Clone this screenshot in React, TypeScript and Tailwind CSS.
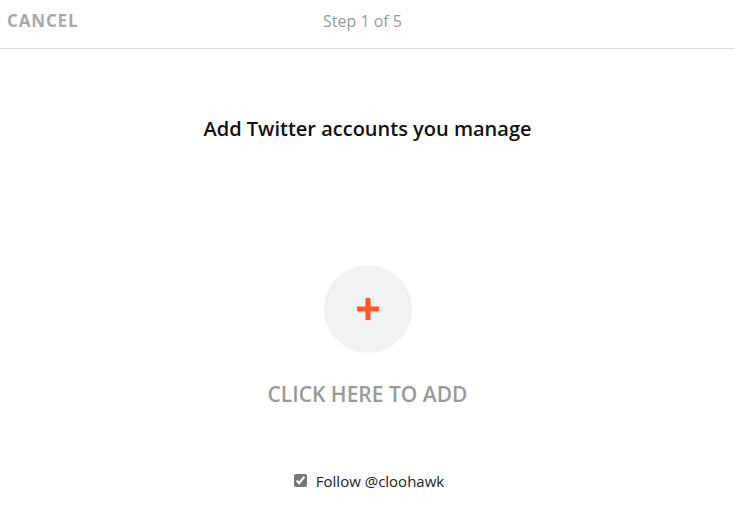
import React, { useState } from 'react';

export default function App() {
  const [follow, setFollow] = useState(true);

  return (
    <div className="min-h-screen bg-white" style={{ fontFamily: '"Open Sans", sans-serif' }}>
      <header className="flex h-[49px] items-center border-b border-[#dddddd] pb-[6px]">
        <button className="w-[90px] pl-[7px] text-left text-[17px] font-bold tracking-[0.05em] text-[#a9a9a9]">
          CANCEL
        </button>
        <div className="flex-1 pr-[100px] text-center text-[16px] text-[#9a9a9a]">Step 1 of 5</div>
      </header>

      <h1 className="mt-[65px] text-center text-[20px] font-semibold text-[#111111]">
        Add Twitter accounts you manage
      </h1>

      <div className="mt-[121px] flex flex-col items-center">
        <button className="flex h-[88px] w-[88px] items-center justify-center rounded-full bg-[#f1f2f4]">
          <svg width="22" height="22" viewBox="0 0 22 22">
            <rect x="8.5" y="0" width="5" height="22" rx="1" fill="#ff5722" />
            <rect x="0" y="8.5" width="22" height="5" rx="1" fill="#ff5722" />
          </svg>
        </button>
        <div className="mt-[26px] text-[21px] font-semibold text-[#9a9a9a]">CLICK HERE TO ADD</div>
      </div>

      <label className="mt-[59px] flex items-center justify-center gap-[9px] pl-[3px] text-[15px] text-[#222222]">
        <input
          type="checkbox"
          checked={follow}
          onChange={() => setFollow(!follow)}
          className="h-[13px] w-[13px] accent-[#777777]"
        />
        Follow @cloohawk
      </label>
    </div>
  );
}
